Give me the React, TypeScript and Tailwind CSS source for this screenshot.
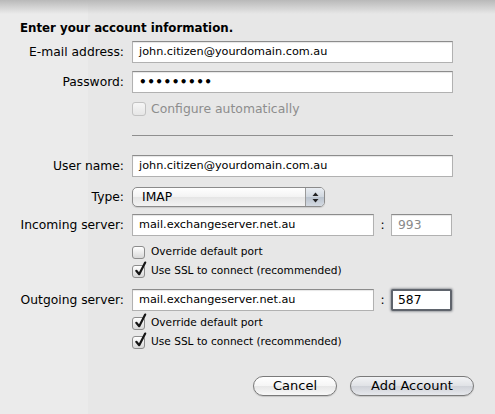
import { ReactNode } from 'react';

const font = { fontFamily: '"DejaVu Sans", "Noto Sans", sans-serif' };

function Label({ children }: { children: ReactNode }) {
  return <div className="w-[124px] shrink-0 text-right text-[12.3px] text-black">{children}</div>;
}

function Field({ children, className = '', muted = false }: { children: ReactNode; className?: string; muted?: boolean }) {
  return (
    <div
      className={`h-[22px] bg-white border border-[#b1b1b1] border-t-[#8c8c8c] shadow-[inset_0_1px_1px_rgba(0,0,0,0.1)] flex items-center px-[6px] text-[11.25px] ${
        muted ? 'text-[#8a8a8a]' : 'text-black'
      } ${className}`}
    >
      {children}
    </div>
  );
}

function Checkbox({ checked, label }: { checked: boolean; label: string }) {
  return (
    <div className="h-[14px] flex items-center gap-[6px] text-[10.6px] text-black">
      <div className="relative w-[13px] h-[13px] rounded-[3px] border border-[#8c8c8c] bg-gradient-to-b from-white to-[#d8d8d8]">
        {checked && (
          <svg className="absolute -top-[5px] left-[1px]" width="13" height="16" viewBox="0 0 13 16">
            <path d="M2.3 9.8 L5.2 13.2 L11.2 1.6" fill="none" stroke="#151515" strokeWidth="2.2" strokeLinecap="round" strokeLinejoin="round" />
          </svg>
        )}
      </div>
      <span>{label}</span>
    </div>
  );
}

function PillButton({ children, primary = false, className = '' }: { children: ReactNode; primary?: boolean; className?: string }) {
  return (
    <button
      className={`h-[20px] rounded-full border border-[#7a7a7a] text-[13px] text-black flex items-center justify-center shadow-[0_1px_1px_rgba(0,0,0,0.15)] ${
        primary
          ? 'bg-[linear-gradient(to_bottom,#f2f3f5_0%,#e0e2e6_50%,#cfd2d8_51%,#e6e8ec_100%)]'
          : 'bg-[linear-gradient(to_bottom,#ffffff_0%,#f5f5f5_50%,#e7e7e7_51%,#f8f8f8_100%)]'
      } ${className}`}
    >
      {children}
    </button>
  );
}

export default function App() {
  return (
    <div
      style={font}
      className="relative w-[495px] h-[414px] overflow-hidden bg-[linear-gradient(to_right,#ebebeb_88px,#e7e7e7_88px)]"
    >
      {/* sheet shadow along the top edge */}
      <div className="absolute inset-x-0 top-0 h-[14px] bg-gradient-to-b from-[#b9b9b9] to-transparent" />

      <div className="relative pt-[19px] flex flex-col">
        <h2 className="h-[18px] leading-[18px] pl-[20px] text-[11.8px] font-bold text-black">Enter your account information.</h2>

        <div className="mt-[4px] flex items-center gap-[8px]">
          <Label>E-mail address:</Label>
          <Field className="w-[321px]">john.citizen@yourdomain.com.au</Field>
        </div>
        <div className="mt-[8px] flex items-center gap-[8px]">
          <Label>Password:</Label>
          <Field className="w-[321px]">
            <span className="text-[12px] font-bold tracking-[0.5px]">•••••••••</span>
          </Field>
        </div>
        {/* disabled option, slightly larger than the port checkboxes */}
        <div className="mt-[8px] pl-[132px] h-[16px] flex items-center gap-[5px] text-[12.4px] text-[#8d8d8d]">
          <div className="w-[14px] h-[14px] rounded-[3px] border border-[#c2c2c2] bg-gradient-to-b from-[#f6f6f6] to-[#e6e6e6]" />
          <span>Configure automatically</span>
        </div>
        <div className="mt-[18px] ml-[132px] w-[321px] h-px bg-[#8f8f8f]" />

        <div className="mt-[19px] flex items-center gap-[8px]">
          <Label>User name:</Label>
          <Field className="w-[321px]">john.citizen@yourdomain.com.au</Field>
        </div>

        <div className="mt-[10px] flex items-center gap-[8px]">
          <Label>Type:</Label>
          <div className="w-[193px] h-[20px] rounded-[5px] border border-[#8b8b8b] flex overflow-hidden bg-[linear-gradient(to_bottom,#ffffff_0%,#f3f3f3_50%,#e5e5e5_51%,#f3f3f3_100%)] shadow-[0_1px_1px_rgba(0,0,0,0.12)]">
            <div className="flex-1 flex items-center pl-[9px] text-[12.3px] text-black">IMAP</div>
            <div className="w-[19px] border-l border-[#9a9a9a] flex items-center justify-center bg-[linear-gradient(to_bottom,#e9edf2_0%,#d0d7df_50%,#bac3ce_51%,#d4dae2_100%)]">
              <svg width="7" height="11" viewBox="0 0 7 11">
                <path d="M3.5 0.5 L6.5 4 L0.5 4 Z" fill="#222" />
                <path d="M3.5 10.5 L6.5 7 L0.5 7 Z" fill="#222" />
              </svg>
            </div>
          </div>
        </div>

        <div className="mt-[7px] flex items-center gap-[8px]">
          <Label>Incoming server:</Label>
          <div className="flex items-center">
            <Field className="w-[242px]">mail.exchangeserver.net.au</Field>
            <span className="w-[17px] text-[12.3px] text-black text-center">:</span>
            <Field muted className="w-[61px] text-[12.3px]">993</Field>
          </div>
        </div>
        <div className="mt-[9px] pl-[132px] flex flex-col gap-[5px]">
          <Checkbox checked={false} label="Override default port" />
          <Checkbox checked label="Use SSL to connect (recommended)" />
        </div>

        <div className="mt-[11px] flex items-center gap-[8px]">
          <Label>Outgoing server:</Label>
          <div className="flex items-center">
            <Field className="w-[242px]">mail.exchangeserver.net.au</Field>
            <span className="w-[17px] text-[12.3px] text-black text-center">:</span>
            <div className="w-[61px] h-[22px] bg-white border-[2px] border-[#5f646c] rounded-[2px] shadow-[0_0_2px_1px_rgba(70,75,85,0.45)] flex items-center px-[5px] text-[12.3px] text-black">
              587
            </div>
          </div>
        </div>
        <div className="mt-[5px] pl-[132px] flex flex-col gap-[5px]">
          <Checkbox checked label="Override default port" />
          <Checkbox checked label="Use SSL to connect (recommended)" />
        </div>

        <div className="mt-[27px] flex justify-end gap-[13px] pr-[21px]">
          <PillButton className="w-[84px]">Cancel</PillButton>
          <PillButton primary className="w-[124px]">Add Account</PillButton>
        </div>
      </div>
    </div>
  );
}
